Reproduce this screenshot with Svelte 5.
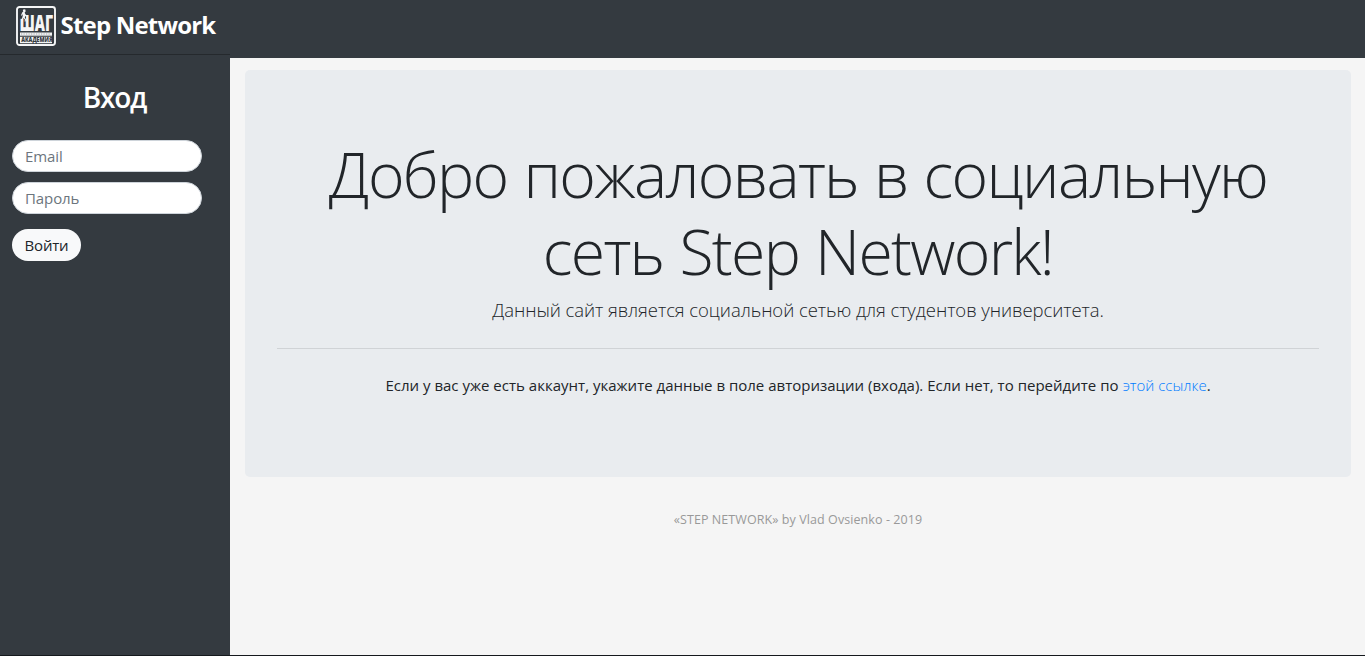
<script>
  let email = $state('');
  let password = $state('');
</script>

<div class="page">
  <header>
    <a class="brand" href="#home">
      <svg class="logo" viewBox="0 0 40 40" width="40" height="40" aria-hidden="true">
        <rect x="1" y="1" width="38" height="38" rx="2.5" fill="none" stroke="#f4f5f6" stroke-width="1.9" />
        <text class="mark" transform="translate(3.6 25.3) scale(.78 1.25)" font-size="18">ШАГ</text>
        <path d="M3.3 6h6.7v6.8h-6.7z" fill="#343a40" />
        <path d="M7.6 3.2l1.8.4.2 2-1 1.2 1.4 2.2 1.8.6v1l-2.3-.5-.7 1.7 1.2 1.4-.4 2.3h-1l.3-2-1.5-1.5-1 3.5H5.2l1.4-5.3.2-2.2-1 1.7-.8-.4 1.3-3 1-.7-.5-1z" fill="#f4f5f6" />
        <rect x="4" y="26.5" width="32" height="3.2" fill="#f0f1f2" />
        <path d="M5 28h30" stroke="#a4a8ac" stroke-width="1" stroke-dasharray="1.2 1.3" />
        <rect x="4" y="30.8" width="32" height="6.4" fill="#f4f5f6" />
        <text class="sub" transform="translate(5.2 36.3) scale(.84 1)" font-size="6.2">АКАДЕМИЯ</text>
      </svg>
      <span class="name">Step Network</span>
    </a>
  </header>

  <div class="body">
    <aside>
      <h1>Вход</h1>
      <form onsubmit={(e) => e.preventDefault()}>
        <input type="email" placeholder="Email" bind:value={email} />
        <input type="password" placeholder="Пароль" bind:value={password} />
        <button type="submit"><span>Войти</span></button>
      </form>
    </aside>

    <main>
      <section class="jumbo">
        <h2>Добро пожаловать в социальную<br />сеть Step Network!</h2>
        <p class="lead">Данный сайт является социальной сетью для студентов университета.</p>
        <hr />
        <p class="hint">Если у вас уже есть аккаунт, укажите данные в поле авторизации (входа). Если нет, то перейдите по <a href="#register">этой ссылке</a>.</p>
      </section>
      <footer>«STEP NETWORK» by Vlad Ovsienko - 2019</footer>
    </main>
  </div>
</div>

<style>
  :global(body) {
    margin: 0;
    overflow: hidden;
  }
  .page {
    box-sizing: border-box;
    display: flex;
    flex-direction: column;
    height: 100vh;
    background: #f5f5f5;
    border-bottom: 1px solid #15191d;
    color: #212529;
    font-family: "Open Sans", "Noto Sans", sans-serif;
    font-size: 16px;
    line-height: 24px;
  }
  header {
    height: 58px;
    flex: none;
    background: #343a40;
  }
  .brand {
    box-sizing: border-box;
    display: flex;
    align-items: center;
    gap: 4.5px;
    width: 230px;
    height: 55px;
    padding: 0 0 3px 16px;
    border-bottom: 1px solid #25292d;
    color: #fff;
    text-decoration: none;
  }
  .logo {
    flex: none;
  }
  .logo text {
    font-family: "Open Sans", sans-serif;
    font-weight: 800;
    fill: #f4f5f6;
  }
  .logo .sub {
    fill: #343a40;
  }
  .name {
    margin-top: -2px;
    font-size: 24px;
    font-weight: 700;
    white-space: nowrap;
    letter-spacing: -0.8px;
  }
  .body {
    display: flex;
    flex: 1;
    min-height: 0;
  }
  aside {
    box-sizing: border-box;
    width: 230px;
    flex: none;
    padding: 22px 28px 0 12px;
    background: #343a40;
  }
  h1 {
    margin: 0 -15px 26px 0;
    color: #fff;
    font-size: 28px;
    font-weight: 600;
    line-height: 34px;
    letter-spacing: -1.2px;
    text-align: center;
  }
  form {
    display: flex;
    flex-direction: column;
    align-items: flex-start;
  }
  input {
    box-sizing: border-box;
    width: 190px;
    height: 32px;
    margin: 0 0 10px;
    padding: 0 12px;
    border: 1px solid #ced4da;
    border-radius: 16px;
    background: #fff;
    font: 400 15px/24px "Open Sans", "Noto Sans", sans-serif;
    letter-spacing: -0.1px;
    outline: 0;
  }
  input::placeholder {
    color: #6c757d;
    opacity: 1;
  }
  button {
    width: 69px;
    height: 32px;
    margin: 5px 0 0;
    padding: 0;
    border: 0;
    border-radius: 16px;
    background: #f8f9fa;
    color: #212529;
    font: 400 15px/24px "Open Sans", "Noto Sans", sans-serif;
    letter-spacing: -0.2px;
  }
  main {
    flex: 1;
    padding: 12px 14px 0 15px;
  }
  .jumbo {
    box-sizing: border-box;
    height: 407px;
    padding: 66px 32px 62px;
    border-radius: 5px;
    background: #e9ecef;
    text-align: center;
  }
  h2 {
    margin: 0 0 6px;
    font-size: 62.5px;
    font-weight: 300;
    line-height: 76.8px;
    letter-spacing: -1.7px;
    word-spacing: 1.4px;
    white-space: nowrap;
  }
  .lead {
    margin: 0;
    font-size: 18.5px;
    font-weight: 300;
    line-height: 28.6px;
    letter-spacing: -0.06px;
    white-space: nowrap;
  }
  hr {
    margin: 24px 0;
    border: 0;
    border-top: 1px solid #d0d3d6;
  }
  .hint {
    margin: 0;
    font-size: 15px;
    letter-spacing: 0.01px;
    white-space: nowrap;
  }
  a {
    color: #007bff;
    text-decoration: none;
  }
  .hint a {
    font-weight: 300;
  }
  footer {
    margin-top: 31px;
    color: #999;
    font-size: 12.5px;
    letter-spacing: 0.08px;
    text-align: center;
  }
</style>
